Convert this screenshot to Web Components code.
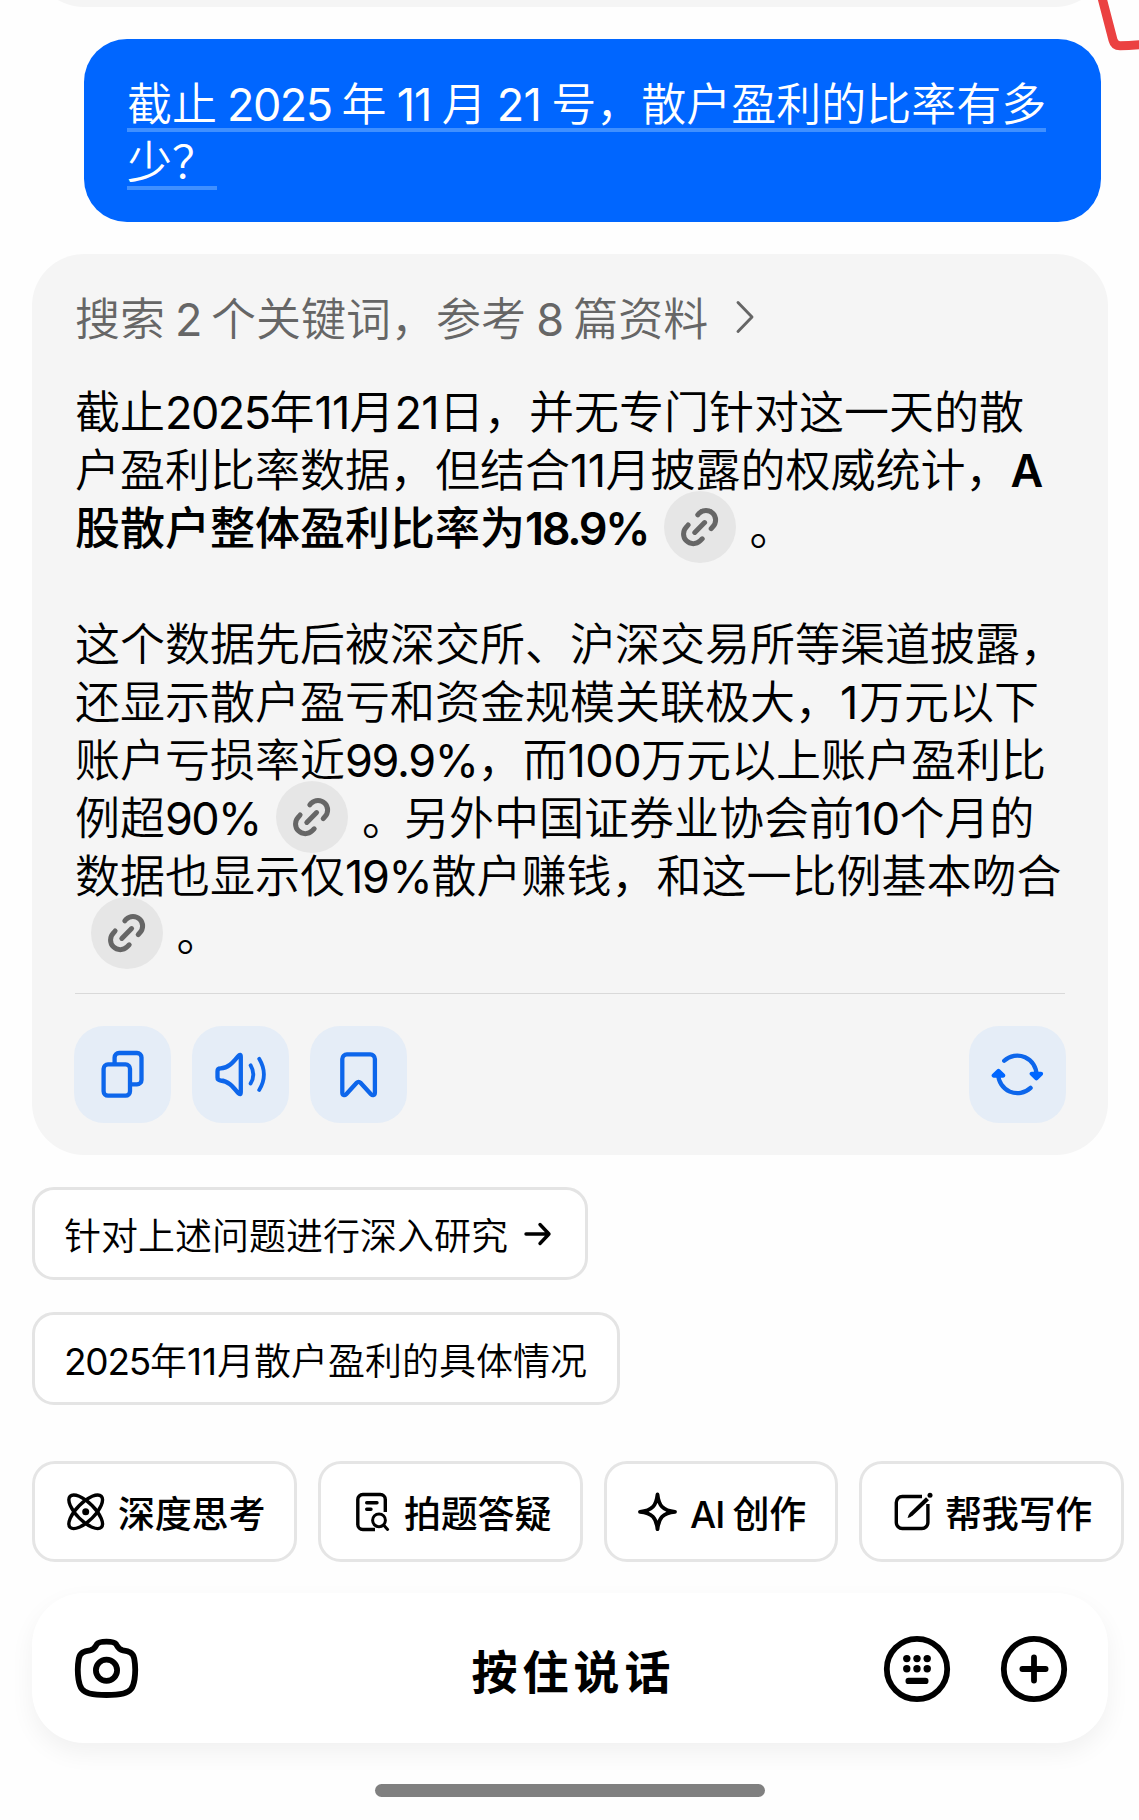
<!DOCTYPE html>
<html lang="zh-CN">
<head>
<meta charset="utf-8">
<title>AI 对话</title>
<style>
html, body { margin: 0; padding: 0; background: #fefefe; }
body { width: 1139px; height: 1820px; overflow: hidden; font-family: "Noto Sans CJK SC", sans-serif; color: #000; }
</style>
</head>
<body>
<chat-app></chat-app>
<script>
const define = (name, html, setup) => {
  const template = document.createElement('template');
  template.innerHTML = html.replace(/\n\s*/g, '');
  customElements.define(name, class extends HTMLElement {
    constructor() {
      super();
      this.attachShadow({ mode: 'open' }).append(template.content.cloneNode(true));
    }
    connectedCallback() { if (setup) setup(this, this.shadowRoot); }
  });
};

/* Latin run: letter spacing is tuned so that the run takes exactly w pixels */
define('latin-run', `
<style>:host{display:inline;line-height:0;font-family:Inter,"Noto Sans CJK SC",sans-serif;font-weight:var(--latin-weight,400);font-feature-settings:"calt" 0}</style><span><slot></slot></span>`,
(host, root) => {
  const span = root.querySelector('span');
  const natural = span.getBoundingClientRect().width;
  const count = host.textContent.length;
  span.style.letterSpacing = ((+host.getAttribute('w') - natural) / count) + 'px';
});

define('text-line', `
<style>:host{display:block;height:58px;line-height:55px;font-size:45px;font-weight:350;white-space:pre}</style><slot></slot>`);

define('cite-link', `
<style>:host{display:inline-flex;width:72px;height:72px;margin:-7px 14px -10px 15.5px;border-radius:50%;background:#e6e6e6;vertical-align:top}</style>
<svg width="72" height="72" viewBox="-36 -36 72 72" fill="none" stroke="#666" stroke-width="5" stroke-linecap="round">
<path d="M-2.2-12.2-.8-13.8A9.6 9.6 0 0 1 12.8-.2L11.2 1.6M2.2 11.8.2 13.8A9.6 9.6 0 0 1-13.6 0L-11.9-2M-5.2 5.4 4.6-4.4"/></svg>`);

define('user-bubble', `
<style>
:host{display:block;box-sizing:border-box;width:1017px;height:183px;margin:32px 0 0 84px;padding:35px 43px 0;border-radius:43px;background:#06f;color:#fff;--rule:#4090ff}
::slotted(text-line){width:max-content;background:linear-gradient(var(--rule),var(--rule)) bottom/100% 4px no-repeat}
</style><slot></slot>`);

define('source-header', `
<style>
:host{display:flex;align-items:center;height:58px;color:#666;gap:26px}
svg{margin-bottom:2px}
</style><slot></slot>
<svg width="24" height="36" viewBox="0 0 24 36" fill="none" stroke="#666" stroke-width="2.9" stroke-linecap="round" stroke-linejoin="round"><path d="M4 3.5 18 18 4 32.5"/></svg>`);

define('icon-button', `
<style>
:host{display:block;width:97px;height:97px;border-radius:30px;background:#e5edf7}
svg{display:block}
</style>
<svg width="97" height="97" viewBox="0 0 97 97" fill="none" stroke="#0d66eb" stroke-width="4.3" stroke-linecap="round" stroke-linejoin="round"></svg>`,
(host, root) => {
  const art = {
    copy: '<rect x="29.6" y="38.4" width="26.4" height="31.3" rx="4.4"/><path stroke-linecap="butt" d="M40.6 37.5v-6a4.5 4.5 0 0 1 4.5-4.5H63a4.5 4.5 0 0 1 4.5 4.5v22.4a4.5 4.5 0 0 1-4.5 4.5h-6"/>',
    sound: '<path d="M28.6 42.4C36 42 40.5 37 46 30.3Q48.8 27 48.8 31V66Q48.8 70 46 66.8C40.5 60 36 54.8 28.6 54.5Q25.5 54.3 25.5 51.6V45.2Q25.5 42.5 28.6 42.4Z"/><path stroke-width="3.8" d="M58.6 39.3Q64 48.5 58.6 57.5M67.2 32.8Q76.6 48.5 67.2 64"/>',
    mark: '<path d="M37 28.4H60.2A4.6 4.6 0 0 1 64.9 33V66.5C64.9 69.5 62.6 69.8 61 68.2L50.5 56.8Q48.6 54.8 46.7 56.8L36.2 68.2C34.6 69.8 32.3 69.5 32.3 66.5V33A4.6 4.6 0 0 1 37 28.4Z"/>',
    refresh: '<path d="M35.2 34.8A19.2 19.2 0 0 1 67.5 49M61.6 61.9A19.2 19.2 0 0 1 29.2 48"/><path fill="#06f" stroke="#06f" d="M62.8 47.8H72L67.4 52.2ZM24.8 49.6H34.2L29.5 45Z"/>'
  };
  root.querySelector('svg').innerHTML = art[host.getAttribute('icon')];
});

define('action-bar', `
<style>
:host{display:flex;justify-content:space-between;margin-top:32px;margin-left:-1px;margin-right:-1px}
div{display:flex;gap:21px}
</style><div><slot></slot></div><slot name="end"></slot>`);

define('answer-card', `
<style>
:host{display:block;box-sizing:border-box;width:1076px;height:901px;margin:32px 0 0 32px;padding:35px 43px 0 43px;border-radius:52px;background:#f5f5f5}
.body{margin:35px 0 0;height:612px;box-sizing:border-box;border-bottom:1px solid #d9d9d9}
.gap{height:58px}
.period{letter-spacing:-3px}
</style>
<slot name="head"></slot>
<div class="body"><slot name="first"></slot><div class="gap"></div><slot></slot></div>
<slot name="foot"></slot>`);

define('suggest-chip', `
<style>
:host{display:flex;align-items:center;box-sizing:border-box;width:max-content;height:93px;padding:0 30px 0 29px;border:3px solid #e4e4e4;border-radius:22px;background:#fff;font-size:37px;font-weight:350;line-height:58px;white-space:pre}
svg{margin:0 3px 0 14px}
:host(:not([arrow])) svg{display:none}
</style><span><slot></slot></span>
<svg width="30" height="30" viewBox="0 0 30 30" fill="none" stroke="#000" stroke-width="3.4" stroke-linecap="round" stroke-linejoin="round"><path d="M4 15H27M18 5.5 27 15 18 24.5"/></svg>`);

define('tool-chip', `
<style>
:host{display:flex;align-items:center;box-sizing:border-box;height:101px;padding:0 28.8px 0 30px;gap:11px;border:3px solid #e5e5e5;border-radius:23px;background:#fff;font-size:37px;font-weight:500;line-height:54px;white-space:pre;--latin-weight:500}
svg{flex:none}
.t{letter-spacing:-.2px}
</style>
<svg width="42" height="42" viewBox="0 0 42 42" fill="none" stroke="#000" stroke-width="3.4" stroke-linecap="round" stroke-linejoin="round"></svg><span class="t"><slot></slot></span>`,
(host, root) => {
  const art = {
    atom: '<ellipse cx="20.7" cy="20.8" rx="22" ry="9" transform="rotate(45 20.7 20.8)"/><ellipse cx="20.7" cy="20.8" rx="22" ry="9" transform="rotate(-45 20.7 20.8)"/><circle cx="20.7" cy="20.8" r="3.5" fill="#000" stroke="none"/>',
    scan: '<path stroke-linecap="butt" d="M34.3 21V8.5A5 5 0 0 0 29.3 3.5H11.8A5 5 0 0 0 6.8 8.5V33.5A5 5 0 0 0 11.8 38.5H24"/><path d="M15.7 11.8H26M15.7 18.3H20"/><circle cx="28" cy="29.3" r="6.4" stroke-width="3"/><path d="M33 34.5 36.6 38.5" stroke-width="3"/>',
    spark: '<path stroke-width="3.8" d="M20.5 3.4C21.8 14.5 25.5 19.6 38 20.8C25.5 22 21.8 27.1 20.5 38.2C19.2 27.1 15.5 22 3 20.8C15.5 19.6 19.2 14.5 20.5 3.4Z"/>',
    write: '<path stroke-linecap="butt" stroke-width="3.4" d="M30 5.5H10.3A6 6 0 0 0 4.3 11.5V31.5A6 6 0 0 0 10.3 37.5H29.9A6 6 0 0 0 35.9 31.5V13"/><path fill="#000" stroke="none" d="M34 6.2 37 9.2 20.8 24.5Q18 26.8 15.6 27Q16 24.2 18 21.8Z"/><circle cx="38" cy="4.2" r="2.5" fill="#000" stroke="none"/>'
  };
  root.querySelector('svg').innerHTML = art[host.getAttribute('icon')];
});

define('voice-bar', `
<style>
:host{display:flex;align-items:center;box-sizing:border-box;width:1076px;height:150px;margin:31px 0 0 32px;padding:1px 40px 0 42px;border-radius:52px;background:#fff;box-shadow:0 10px 24px rgba(0,0,0,.055)}
svg{display:block;flex:none}
.label{flex:1;display:flex;justify-content:center;padding-left:125px;font-size:46px;font-weight:700;letter-spacing:5px;line-height:60px}
.right{display:flex;gap:49px}
</style>
<svg width="65" height="62" viewBox="0 0 65 62" fill="none" stroke="#000" stroke-width="5.8" stroke-linejoin="round"><path d="M32.5 3.6C37 3.6 40.5 4 42 6C44 9 44 11.5 49 12.4C55 13.3 59 14.5 60.2 20.5C61.4 27 61.6 34 60.5 41.5C59.2 50 56.5 53.7 49.5 55.5C44.5 56.7 38.5 57 32.5 57S20.5 56.7 15.5 55.5C8.5 53.7 5.8 50 4.5 41.5C3.4 34 3.6 27 4.8 20.5C6 14.5 10 13.3 16 12.4C21 11.5 21 9 23 6C24.5 4 28 3.6 32.5 3.6Z"/><circle cx="32.5" cy="32.3" r="10.6"/></svg>
<div class="label"><span><slot></slot></span></div>
<div class="right">
<svg width="68" height="68" viewBox="-34 -34 68 68"><circle r="30.2" fill="none" stroke="#000" stroke-width="5.8"/><g><circle cx="-10.2" cy="-10.4" r="3.7"/><circle cy="-10.4" r="3.7"/><circle cx="10.2" cy="-10.4" r="3.7"/><circle cx="-10.2" cy="-.3" r="3.7"/><circle cy="-.3" r="3.7"/><circle cx="10.2" cy="-.3" r="3.7"/><rect x="-11.5" y="8.7" width="23" height="6.4" rx="3.2"/></g></svg>
<svg width="68" height="68" viewBox="-34 -34 68 68" fill="none" stroke="#000" stroke-width="5.8" stroke-linecap="round"><circle r="30.2"/><path d="M-11.6 0H11.6M0-11.6V11.6"/></svg>
</div>`);

define('chat-app', `
<style>
:host{display:block;position:relative;width:1139px;height:1820px;overflow:hidden}
.previous{height:7px;margin:0 32px;display:flex;align-items:flex-end;overflow:hidden}
.previous div{flex:1;height:104px;border-radius:52px;background:#f5f5f5}
.suggestions{display:flex;flex-direction:column;gap:32px;margin:32px 0 0 32px}
.tools{display:flex;gap:21px;margin:56px 0 0 32px}
.home{width:390px;height:13px;margin:41px auto 0;border-radius:6.5px;background:#808080}
.ink{position:absolute;top:0;right:0}
b{font-weight:500;--latin-weight:600}
.stop{letter-spacing:-3px}
</style>
<div class="previous"><div></div></div>
<user-bubble><text-line>截止 <latin-run w="104.5">2025</latin-run> 年 <latin-run w="35">11</latin-run> 月 <latin-run w="44.5">21</latin-run> 号，散户盈利的比率有多</text-line><text-line>少？</text-line></user-bubble>
<answer-card>
<source-header slot="head"><text-line>搜索 <latin-run w="26">2</latin-run> 个关键词，参考 <latin-run w="27">8</latin-run> 篇资料</text-line></source-header>
<text-line slot="first">截止<latin-run w="104.5">2025</latin-run>年<latin-run w="35">11</latin-run>月<latin-run w="44.5">21</latin-run>日，并无专门针对这一天的散</text-line>
<text-line slot="first">户盈利比率数据，但结合<latin-run w="35.5">11</latin-run>月披露的权威统计，<b><latin-run w="33">A</latin-run></b></text-line>
<text-line slot="first"><b>股散户整体盈利比率为<latin-run w="123">18.9%</latin-run></b><cite-link></cite-link>。</text-line>
<text-line>这个数据先后被深交所、沪深交易所等渠道披露，</text-line>
<text-line>还显示散户盈亏和资金规模关联极大，<latin-run w="19">1</latin-run>万元以下</text-line>
<text-line>账户亏损率近<latin-run w="132.5">99.9%</latin-run>，而<latin-run w="73.5">100</latin-run>万元以上账户盈利比</text-line>
<text-line>例超<latin-run w="95.5">90%</latin-run><cite-link></cite-link><span class="stop">。</span>另外中国证券业协会前<latin-run w="45.5">10</latin-run>个月的</text-line>
<text-line>数据也显示仅<latin-run w="86.5">19%</latin-run>散户赚钱，和这一比例基本吻合</text-line>
<text-line><cite-link></cite-link>。</text-line>
<action-bar slot="foot"><icon-button icon="copy"></icon-button><icon-button icon="sound"></icon-button><icon-button icon="mark"></icon-button><icon-button slot="end" icon="refresh"></icon-button></action-bar>
</answer-card>
<div class="suggestions">
<suggest-chip arrow>针对上述问题进行深入研究</suggest-chip>
<suggest-chip><latin-run w="86">2025</latin-run>年<latin-run w="30">11</latin-run>月散户盈利的具体情况</suggest-chip>
</div>
<div class="tools">
<tool-chip icon="atom">深度思考</tool-chip><tool-chip icon="scan">拍题答疑</tool-chip><tool-chip icon="spark"><latin-run w="34">AI</latin-run> 创作</tool-chip><tool-chip icon="write">帮我写作</tool-chip>
</div>
<voice-bar>按住说话</voice-bar>
<div class="home"></div>
<svg class="ink" width="49" height="56" viewBox="1090 0 49 56" fill="none" stroke="#eb4141" stroke-width="9" stroke-linejoin="round"><path d="M1100.5-8 1113 40Q1114.5 45.8 1120 45.8 1130 45.8 1144 44.3"/></svg>
`);
</script>
</body>
</html>
